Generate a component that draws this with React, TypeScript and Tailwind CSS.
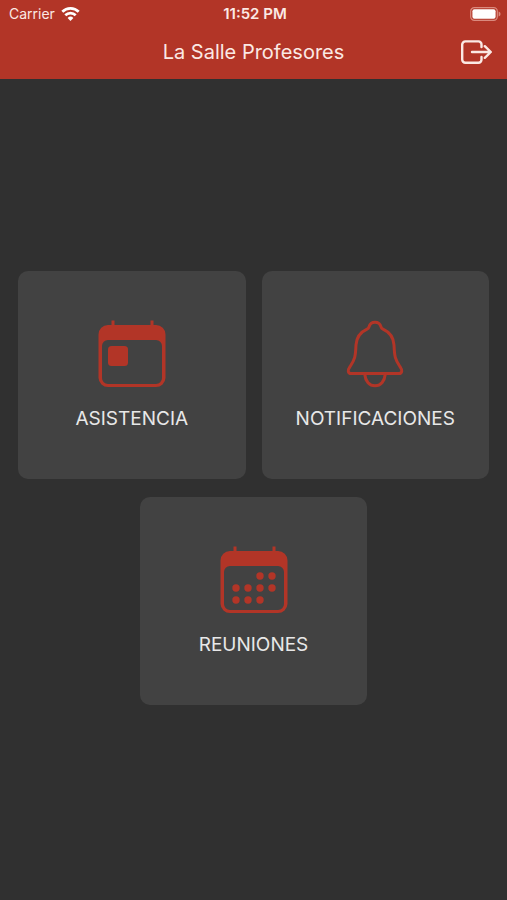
import React from "react";

export default function App() {
  return (
    <div className="flex flex-col min-h-screen bg-[#303030] font-['Inter','Liberation_Sans',sans-serif]">
      <header className="bg-[#b23527] text-[#fbe9e4] pb-[3px]">
        <StatusBar />
        <div className="grid grid-cols-[1fr_auto_1fr] items-center h-12 px-[15px]">
          <h1 className="col-start-2 text-[20px] leading-7">La Salle Profesores</h1>
          <button type="button" aria-label="Cerrar sesión" className="justify-self-end">
            <LogoutIcon />
          </button>
        </div>
      </header>

      {/* Menu */}
      <main className="flex-1 flex flex-col justify-center px-[18px] pb-1">
        <div className="flex flex-wrap justify-center gap-x-4 gap-y-[18px]">
          <MenuCard icon={<TodayIcon />} title="ASISTENCIA" />
          <MenuCard icon={<BellIcon />} title="NOTIFICACIONES" />
          <MenuCard icon={<CalendarIcon />} title="REUNIONES" />
        </div>
      </main>
    </div>
  );
}

function StatusBar() {
  return (
    <div className="grid grid-cols-[1fr_auto_1fr] items-center h-7 pl-[9px] pr-[6px] text-[14px] leading-5">
      <div className="flex items-center gap-[6px]">
        <span>Carrier</span>
        <svg width="19" height="14" viewBox="0 0 19 14" fill="none" stroke="#fff" strokeWidth="2.7">
          <path d="M1.3 4.8a11.6 11.6 0 0 1 16.4 0" />
          <path d="M4.3 8.2a7.4 7.4 0 0 1 10.4 0" />
          <path d="M9.5 14l-2.9-3a4.2 4.2 0 0 1 5.8 0z" fill="#fff" stroke="none" />
        </svg>
      </div>
      <span className="text-[15px] font-semibold">11:52 PM</span>
      <svg className="justify-self-end" width="31" height="14" viewBox="0 0 31 14">
        <rect x="0.7" y="0.7" width="26.6" height="12.6" rx="3.6" fill="none" stroke="#da8a7e" strokeWidth="1.2" />
        <rect x="2.4" y="2.2" width="23.2" height="9.6" rx="2" fill="#fff" />
        <path d="M28.6 4.6c1.4.5 1.9 1.4 1.9 2.4s-.5 1.9-1.9 2.4z" fill="#da8a7e" />
      </svg>
    </div>
  );
}

function MenuCard({ icon, title }: { icon: React.ReactNode; title: string }) {
  return (
    <button
      type="button"
      className="w-[calc(50%-8px)] min-h-[208px] pt-[3px] flex flex-col items-center justify-center gap-[17px] rounded-[10px] bg-[#424242] text-[#e8e8e8]"
    >
      {icon}
      <span className="text-[19px] leading-7">{title}</span>
    </button>
  );
}

function LogoutIcon() {
  return (
    <svg width="32" height="26" viewBox="0 0 32 26" fill="none" stroke="#fbe9e4" strokeWidth="2.4" strokeLinecap="round" strokeLinejoin="round">
      <path d="M21.5 8V5.4a3 3 0 0 0-3-3H5.4a3.2 3.2 0 0 0-3.2 3.2v15a3.200 3.200 0 0 0 3.200 3.200h13.100a3 3 0 0 0 3-3V18" />
      <path d="M12 13h18.600M24.800 7.200l6 5.800-6 5.800" />
    </svg>
  );
}

function CalendarFrame({ children }: { children: React.ReactNode }) {
  return (
    <svg width="68" height="68" viewBox="0 0 68 68" fill="#b23527">
      <path d="M13.5 .5h3v5h-3zM52.500 .5h3v5h-3z" />
      <path
        fillRule="evenodd"
        d="M10 5h48a9.500 9.500 0 0 1 9.500 9.500v43.500a9.500 9.500 0 0 1-9.500 9H10a9.500 9.500 0 0 1-9.500-9V14.500a9.500 9.500 0 0 1 9.500-9.500zM10 20a6 6 0 0 0-6 6V58a6 6 0 0 0 6 6h48a6 6 0 0 0 6-6V26a6 6 0 0 0-6-6z"
      />
      {children}
    </svg>
  );
}

function TodayIcon() {
  return (
    <CalendarFrame>
      <rect x="10" y="26" width="20" height="20" rx="3.500" />
    </CalendarFrame>
  );
}

function CalendarIcon() {
  const dots = [
    [40, 30], [52, 30],
    [16, 42], [28, 42], [40, 42], [52, 42],
    [16, 54], [28, 54], [40, 54],
  ];
  return (
    <CalendarFrame>
      {dots.map(([x, y]) => (
        <circle key={`${x}-${y}`} cx={x} cy={y} r="3.7" />
      ))}
    </CalendarFrame>
  );
}

function BellIcon() {
  return (
    <svg width="68" height="68" viewBox="0 0 68 68" fill="none" stroke="#b23527" strokeWidth="3" strokeLinecap="round" strokeLinejoin="round">
      <path d="M34 2.200c-3.200 0-5.200 1.600-6 4.600-.3 1.100-1 1.800-2 2.300-7 3.200-10.600 8.200-11 15.900-.5 11.500-1 14-6 21.700-1.500 2.200-2 3.400-1.700 4.600.3 1.300 1.200 2.200 2.700 2.200h48c1.500 0 2.400-.9 2.700-2.200.3-1.200-.2-2.400-1.700-4.600-5-7.700-5.500-10.200-6-21.700-.4-7.700-4-12.700-11-15.900-1-.5-1.700-1.200-2-2.300-.8-3-2.800-4.600-6-4.600z" />
      <path d="M23.800 54.500c.6 6.800 4.600 11.300 10.200 11.300s9.600-4.500 10.200-11.300" />
    </svg>
  );
}
